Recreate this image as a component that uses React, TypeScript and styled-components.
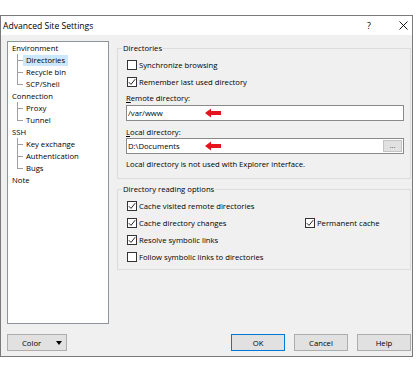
import React from 'react';
import styled, { createGlobalStyle } from 'styled-components';

const GlobalStyle = createGlobalStyle`
  html, body {
    margin: 0;
    padding: 0;
    background: #fff;
  }
  body {
    font-family: "Open Sans", "Liberation Sans", sans-serif;
    font-size: 7.7px;
    color: #000;
  }
`;

const Page = styled.div`
  width: 420px;
  height: 374px;
  box-sizing: border-box;
  padding-top: 15px;
`;

const Window = styled.div`
  width: 413px;
  box-sizing: border-box;
  border: 1px solid #7a7a7a;
  display: flex;
  flex-direction: column;
  background: #f0f0f0;
`;

const TitleBar = styled.div`
  height: 19px;
  background: #fff;
  display: flex;
  align-items: center;
  padding-left: 2px;
`;

const Title = styled.div`
  flex: 1;
  font-size: 8.6px;
`;

const TitleButtons = styled.div`
  display: flex;
  gap: 16px;
`;

const TitleButton = styled.div`
  width: 18px;
  height: 19px;
  display: flex;
  align-items: center;
  justify-content: center;
  font-size: 9px;
`;

const Body = styled.div`
  display: grid;
  grid-template-columns: 102px 294px;
  grid-template-rows: 283px 17px;
  column-gap: 8px;
  row-gap: 10px;
  padding: 6px 1px 5px 6px;
`;

const TreePanel = styled.div`
  box-sizing: border-box;
  background: #fff;
  border: 1px solid #8f939a;
`;

const TreeRoot = styled.div`
  height: 12px;
  line-height: 12px;
  padding-left: 4px;
`;

const TreeChild = styled.div<{ $last?: boolean }>`
  position: relative;
  height: 12px;
  display: flex;
  align-items: center;
  padding-left: 15px;

  &::before {
    content: '';
    position: absolute;
    left: 9px;
    top: 0;
    width: 1px;
    height: ${(p) => (p.$last ? '6px' : '12px')};
    background: #a0a0a0;
  }
  &::after {
    content: '';
    position: absolute;
    left: 9px;
    top: 6px;
    width: 6px;
    height: 1px;
    background: #a0a0a0;
  }
`;

const TreeLabel = styled.span<{ $selected?: boolean }>`
  padding: 0 3px;
  line-height: 11px;
  background: ${(p) => (p.$selected ? '#cce8ff' : 'transparent')};
`;

const RightColumn = styled.div`
  display: flex;
  flex-direction: column;
  gap: 5px;
  padding-top: 2px;
`;

const Group = styled.fieldset<{ $bottom: number }>`
  margin: 0;
  min-width: 0;
  border: 1px solid #dcdcdc;
  padding: 3px 6px ${(p) => p.$bottom}px 8px;
`;

const Legend = styled.legend`
  margin-left: -4px;
  padding: 0 1px;
  line-height: 10px;
`;

const CheckRow = styled.label`
  display: flex;
  align-items: center;
  gap: 2px;
  height: 17px;
  padding-left: 1px;
  white-space: nowrap;
`;

const SplitRow = styled.div`
  display: grid;
  grid-template-columns: 178px 1fr;
`;

const Box = styled.span`
  width: 10px;
  height: 10px;
  box-sizing: border-box;
  border: 1px solid #333;
  background: #fff;
  display: flex;
  align-items: center;
  justify-content: center;
`;

const FieldLabel = styled.div<{ $top: number }>`
  line-height: 12px;
  margin-top: ${(p) => p.$top}px;
`;

const TextBox = styled.div<{ $top: number }>`
  position: relative;
  height: 16px;
  box-sizing: border-box;
  margin-top: ${(p) => p.$top}px;
  border: 1px solid #8a8a8a;
  background: #fff;
  display: flex;
  align-items: center;
  padding-left: 1px;
`;

const BrowseButton = styled.div`
  margin-left: auto;
  margin-right: 1px;
  width: 19px;
  height: 12px;
  box-sizing: border-box;
  background: #e1e1e1;
  border: 1px solid #c4c4c4;
  display: flex;
  align-items: center;
  justify-content: center;
  font-size: 7px;
  line-height: 8px;
  color: #444;
`;

const Arrow = styled.svg`
  position: absolute;
  left: 78px;
  top: 50%;
  margin-top: -5px;
`;

const Note = styled.div`
  line-height: 12px;
  margin-top: 4px;
`;

const ButtonBar = styled.div`
  display: flex;
  justify-content: flex-end;
  gap: 9px;
`;

const Button = styled.div<{ $default?: boolean }>`
  width: 54px;
  height: 17px;
  box-sizing: border-box;
  background: #e1e1e1;
  border: 1px solid ${(p) => (p.$default ? '#0078d7' : '#adadad')};
  display: flex;
  align-items: center;
  justify-content: center;
`;

const ColorButton = styled.div`
  width: 60px;
  height: 17px;
  box-sizing: border-box;
  background: #e1e1e1;
  border: 1px solid #adadad;
  display: flex;
  align-items: center;
  justify-content: space-between;
  padding: 0 4px 0 14px;
`;

const DropTriangle = styled.span`
  width: 0;
  height: 0;
  border-left: 3px solid transparent;
  border-right: 3px solid transparent;
  border-top: 4px solid #000;
`;

function Check({ checked }: { checked?: boolean }) {
  return (
    <Box>
      {checked && (
        <svg width="8" height="8" viewBox="0 0 8 8">
          <polyline points="0.8,4.2 3,6.4 7.2,1.2" fill="none" stroke="#222" strokeWidth="1" />
        </svg>
      )}
    </Box>
  );
}

function CheckItem({ label, checked }: { label: string; checked?: boolean }) {
  return (
    <CheckRow>
      <Check checked={checked} />
      <span>{label}</span>
    </CheckRow>
  );
}

function RedArrow() {
  return (
    <Arrow width="16" height="10" viewBox="0 0 16 10">
      <polygon points="0,5 6,0.5 6,3 16,3 16,7 6,7 6,9.5" fill="#e3141b" />
    </Arrow>
  );
}

const tree = [
  { name: 'Environment', children: ['Directories', 'Recycle bin', 'SCP/Shell'] },
  { name: 'Connection', children: ['Proxy', 'Tunnel'] },
  { name: 'SSH', children: ['Key exchange', 'Authentication', 'Bugs'] },
  { name: 'Note', children: [] as string[] },
];

export default function App() {
  return (
    <Page>
      <GlobalStyle />
      <Window>
        <TitleBar>
          <Title>Advanced Site Settings</Title>
          <TitleButtons>
            <TitleButton>?</TitleButton>
            <TitleButton>
              <svg width="9" height="9" viewBox="0 0 9 9">
                <path d="M0.5 0.5 L8.5 8.5 M8.5 0.5 L0.5 8.5" stroke="#000" strokeWidth="0.9" />
              </svg>
            </TitleButton>
          </TitleButtons>
        </TitleBar>
        <Body>
          <TreePanel>
            {tree.map((node) => (
              <div key={node.name}>
                <TreeRoot>{node.name}</TreeRoot>
                {node.children.map((child, i) => (
                  <TreeChild key={child} $last={i === node.children.length - 1}>
                    <TreeLabel $selected={child === 'Directories'}>{child}</TreeLabel>
                  </TreeChild>
                ))}
              </div>
            ))}
          </TreePanel>
          <RightColumn>
            <Group $bottom={8}>
              <Legend>Directories</Legend>
              <CheckItem label="Synchronize browsing" />
              <CheckItem label="Remember last used directory" checked />
              <FieldLabel $top={2}>
                <u>R</u>emote directory:
              </FieldLabel>
              <TextBox $top={1}>
                /var/www
                <RedArrow />
              </TextBox>
              <FieldLabel $top={5}>
                <u>L</u>ocal directory:
              </FieldLabel>
              <TextBox $top={0}>
                D:\Documents
                <RedArrow />
                <BrowseButton>...</BrowseButton>
              </TextBox>
              <Note>Local directory is not used with Explorer interface.</Note>
            </Group>
            <Group $bottom={4}>
              <Legend>Directory reading options</Legend>
              <CheckItem label="Cache visited remote directories" checked />
              <SplitRow>
                <CheckItem label="Cache directory changes" checked />
                <CheckItem label="Permanent cache" checked />
              </SplitRow>
              <CheckItem label="Resolve symbolic links" checked />
              <CheckItem label="Follow symbolic links to directories" />
            </Group>
          </RightColumn>
          <ColorButton>
            <span>Color</span>
            <DropTriangle />
          </ColorButton>
          <ButtonBar>
            <Button $default>OK</Button>
            <Button>Cancel</Button>
            <Button>Help</Button>
          </ButtonBar>
        </Body>
      </Window>
    </Page>
  );
}
